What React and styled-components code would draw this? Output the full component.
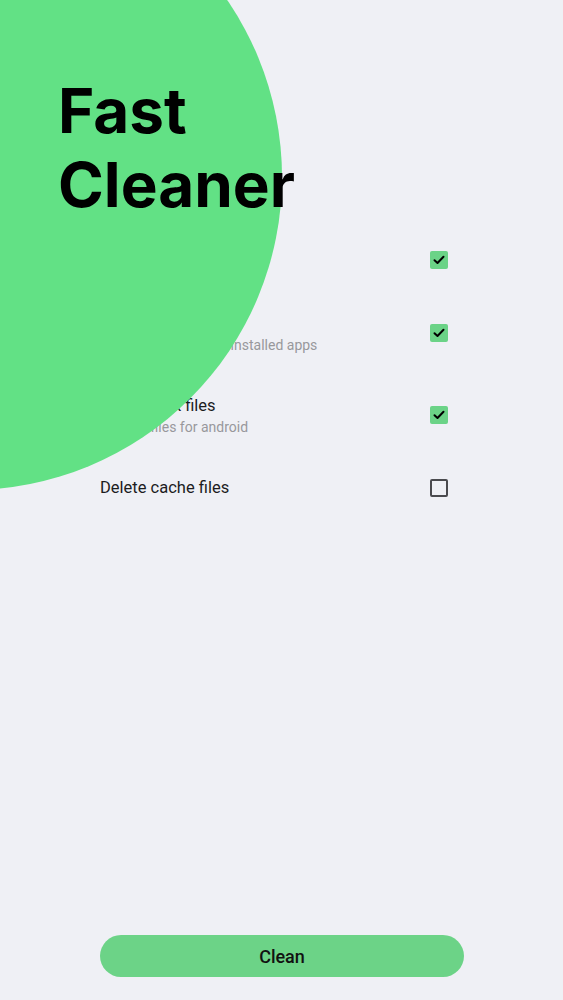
import React from 'react';
import styled, { createGlobalStyle } from 'styled-components';

const GlobalStyle = createGlobalStyle`
  html, body {
    margin: 0;
    padding: 0;
    background: #eff0f5;
  }
  * { box-sizing: border-box; }
`;

const Page = styled.div`
  /* 전체 화면 */
  position: relative;
  overflow: hidden;
  min-height: 1000px;
  display: flex;
  flex-direction: column;
  background: #eff0f5;
  font-family: Roboto, 'Noto Sans', sans-serif;
`;

const Blob = styled.div`
  /* 뒤에 깔린 큰 초록 원 (목록 글자 위에 겹침) */
  position: absolute;
  left: -344px;
  top: -136px;
  width: 626px;
  height: 626px;
  border-radius: 50%;
  background: #62e185;
  z-index: 1;
`;

const Title = styled.h1`
  position: relative;
  z-index: 2;
  margin: 74px 0 0 58px;
  font-family: Inter, 'Liberation Sans', sans-serif;
  font-weight: 700;
  font-size: 62px;
  line-height: 74px;
  color: #000;
`;

const List = styled.div`
  display: flex;
  flex-direction: column;
  gap: 16px;
  margin-top: 14px;
  padding: 0 115px 0 100px;
`;

const Row = styled.label`
  display: flex;
  align-items: center;
  justify-content: space-between;
  min-height: 48px;
  padding: 12px 0;
`;

const Texts = styled.div`
  display: flex;
  flex-direction: column;
`;

const Name = styled.span`
  font-size: 16.5px;
  line-height: 24px;
  color: #1c1c1e;
`;

const Desc = styled.span`
  font-size: 14px;
  line-height: 18px;
  color: #98989c;
`;

const Box = styled.span`
  width: 18px;
  height: 18px;
  flex: none;
  border-radius: 2px;
  display: flex;
  align-items: center;
  justify-content: center;
  background: ${(p) => (p.$on ? '#6bd387' : 'transparent')};
  border: ${(p) => (p.$on ? 'none' : '2px solid #4a4a4e')};
`;

const Spacer = styled.div`
  flex: 1;
`;

const Button = styled.button`
  margin: 0 99px 23px 100px;
  height: 42px;
  border: none;
  border-radius: 21px;
  background: #6cd387;
  font-family: Roboto, 'Noto Sans', sans-serif;
  font-weight: 500;
  font-size: 18px;
  color: #111;
  cursor: pointer;
`;

const items = [
  { name: 'Delete temp files', checked: true },
  { name: 'Delete residual files', desc: 'Remaining files of uninstalled apps', checked: true },
  { name: 'Delete junk files', desc: 'Unused files for android', checked: true },
  { name: 'Delete cache files', checked: false },
];

function Check({ on }) {
  return (
    <Box $on={on}>
      {on && (
        <svg width="12" height="10" viewBox="0 0 12 10">
          <path d="M1.5 5.2 L4.5 8 L10.5 1.8" fill="none" stroke="#000" strokeWidth="2" strokeLinecap="round" strokeLinejoin="round" />
        </svg>
      )}
    </Box>
  );
}

export default function App() {
  const [list, setList] = React.useState(items);

  const toggle = (i) => {
    setList(list.map((it, idx) => (idx === i ? { ...it, checked: !it.checked } : it)));
  };

  return (
    <>
      <GlobalStyle />
      <Page>
        <Blob />
        <Title>Fast<br />Cleaner</Title>
        <List>
          {list.map((it, i) => (
            <Row key={it.name} onClick={() => toggle(i)}>
              <Texts>
                <Name>{it.name}</Name>
                {it.desc && <Desc>{it.desc}</Desc>}
              </Texts>
              <Check on={it.checked} />
            </Row>
          ))}
        </List>
        <Spacer />
        <Button type="button">Clean</Button>
      </Page>
    </>
  );
}
